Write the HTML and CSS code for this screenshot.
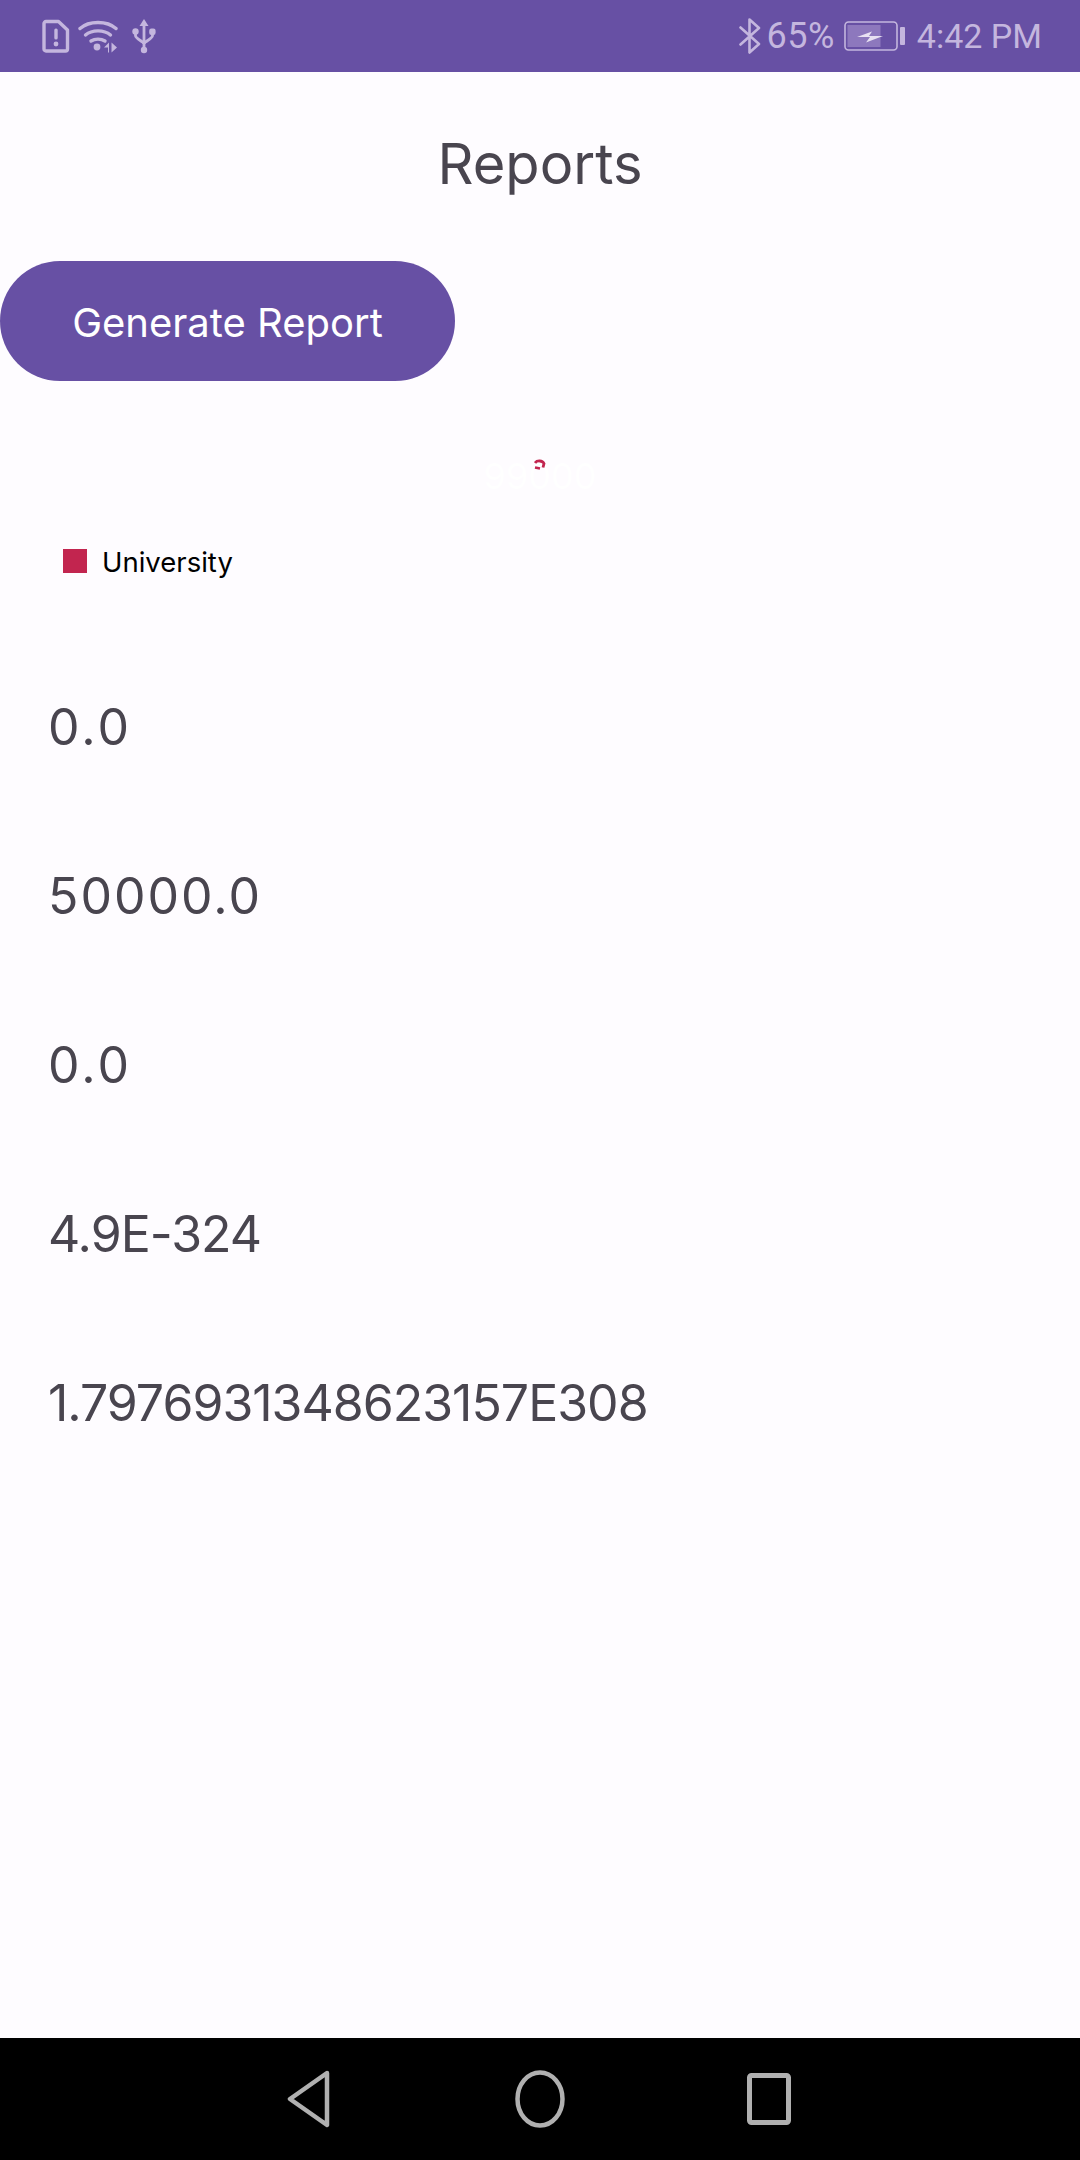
FILE: index.html
```html
<!DOCTYPE html>
<html lang="en">
<head>
  <meta charset="UTF-8" />
  <meta name="viewport" content="width=device-width, initial-scale=1.0" />
  <title>Reports</title>
  <link rel="stylesheet" href="styles.css">
</head>
<body>
  <div class="status-bar">
    <div class="status-left">
      <svg class="icon-file" width="28" height="34" viewBox="0 0 28 34">
        <path d="M4 2.500h12.500L25.500 11v19a2 2 0 0 1-2 2H4a2 2 0 0 1-2-2V4.500a2 2 0 0 1 2-2z" fill="none" stroke="#c4b6de" stroke-width="3.400" stroke-linejoin="round"/>
        <rect x="12.300" y="9.500" width="3.400" height="11" rx="1.500" fill="#c4b6de"/>
        <circle cx="14" cy="25" r="2.400" fill="#c4b6de"/>
      </svg>
      <svg class="icon-wifi" width="40" height="34" viewBox="0 0 40 34">
        <g fill="none" stroke="#c4b6de" stroke-width="3.400" stroke-linecap="round">
          <path d="M2 9.500C11 1.500 29 1.500 38 9.500"/>
          <path d="M7.500 16C14 10.500 26 10.500 32.500 16"/>
          <path d="M13 22C17 19.500 23 19.500 27 22"/>
        </g>
        <circle cx="19" cy="28" r="3.400" fill="#c4b6de"/>
        <path d="M26 28.500l5-5v10h-1v-5zM33.500 23.500v10l5.500-5z" fill="#c4b6de"/>
      </svg>
      <svg class="icon-usb" width="24" height="36" viewBox="0 0 24 36">
        <path d="M12 1l4.500 7h-9z" fill="#c4b6de"/>
        <g fill="none" stroke="#c4b6de" stroke-width="2.800">
          <path d="M12 7v24"/>
          <path d="M3.500 14v3.500c0 3.500 8.500 6 8.500 8.500"/>
          <path d="M20.500 14v3.500c0 3.500-8.500 6-8.500 8.500"/>
        </g>
        <circle cx="3.500" cy="13.500" r="3.200" fill="#c4b6de"/>
        <rect x="17.200" y="10.500" width="6.400" height="6.400" rx="2.200" fill="#c4b6de"/>
        <circle cx="12" cy="32" r="3.200" fill="#c4b6de"/>
      </svg>
    </div>
    <div class="status-right">
      <svg class="icon-bt" width="22" height="36" viewBox="0 0 22 36">
        <path d="M1.500 9.500L20 26 10.500 34.500V1.500L20 10 1.500 26.500" fill="none" stroke="#c4b6de" stroke-width="2.600" stroke-linecap="round" stroke-linejoin="round"/>
      </svg>
      <span class="status-text pct">65%</span>
      <svg class="icon-battery" width="62" height="30" viewBox="0 0 62 30">
        <rect x="1" y="1" width="52" height="28" rx="3.500" fill="none" stroke="#c4b6de" stroke-width="1.600"/>
        <rect x="3.500" y="4" width="33" height="22" fill="#8d78bd"/>
        <path d="M13 16l15-5.500-3 4.500h14l-17 6.500 4-5.500z" fill="#e8e1f2"/>
        <rect x="56" y="6" width="5" height="18" rx="1" fill="#c4b6de"/>
      </svg>
      <span class="status-text clock">4:42 PM</span>
    </div>
  </div>

  <main class="content">
    <h1 class="title">Reports</h1>
    <button class="generate-btn">Generate Report</button>

    <div class="chart">
      <span class="chart-value">99000</span>
      <svg class="chart-arc" width="12" height="12" viewBox="0 0 12 12">
        <path d="M1 5a5 4 0 0 1 9 0.500l-1 4M1 9.500l5 1" fill="none" stroke="#c2254f" stroke-width="2.800"/>
      </svg>
    </div>

    <div class="legend">
      <span class="legend-swatch"></span>
      <span class="legend-label">University</span>
    </div>

    <div class="stats">
      <p class="stat stat-loose">0.0</p>
      <p class="stat stat-wide">50000.0</p>
      <p class="stat stat-loose">0.0</p>
      <p class="stat stat-tight">4.9E-324</p>
      <p class="stat stat-tight">1.7976931348623157E308</p>
    </div>
  </main>

  <div class="nav-bar">
    <svg width="44" height="58" viewBox="0 0 44 58">
      <path d="M40 3L3 29l37 26z" fill="none" stroke="#b0b0b0" stroke-width="4.500" stroke-linejoin="round"/>
    </svg>
    <svg class="nav-home" width="50" height="58" viewBox="0 0 50 58">
      <ellipse cx="25" cy="29" rx="22.500" ry="26.500" fill="none" stroke="#b0b0b0" stroke-width="4.500"/>
    </svg>
    <svg class="nav-recent" width="45" height="52" viewBox="0 0 45 52">
      <rect x="2.500" y="2.500" width="39" height="47" rx="2" fill="none" stroke="#b0b0b0" stroke-width="5"/>
    </svg>
  </div>
</body>
</html>
```

FILE: styles.css
```css
html, body {
  margin: 0;
  padding: 0;
}
body {
  width: 1080px;
  height: 2160px;
  display: flex;
  flex-direction: column;
  font-family: Inter, Roboto, sans-serif;
  background: #fefcff;
  overflow: hidden;
}
.status-bar {
  height: 72px;
  flex: none;
  background: #6750a4;
  display: flex;
  align-items: center;
  justify-content: space-between;
  padding: 0 38px 0 42px;
  box-sizing: border-box;
}
.status-left, .status-right {
  display: flex;
  align-items: center;
}
.icon-wifi { margin-left: 8px; }
.icon-usb { margin-left: 14px; }
.status-right { gap: 6px; }
.status-text {
  color: #c4b6de;
  font-family: Roboto, sans-serif;
  font-size: 34px;
}
.pct {
  font-size: 36px;
  letter-spacing: 0.500px;
}
.icon-battery { margin-left: 3px; }
.clock { margin-left: 5px; }
.content {
  flex: 1;
  min-height: 0;
  position: relative;
}
.title {
  margin: 0;
  padding-top: 59px;
  height: 66px;
  line-height: 66px;
  text-align: center;
  font-size: 56px;
  font-weight: 400;
  color: #49454f;
}
.generate-btn {
  display: block;
  width: 455px;
  height: 120px;
  margin-top: 64px;
  padding: 2px 0 0;
  border: none;
  border-radius: 60px;
  background: #6750a4;
  color: #fff;
  font-family: inherit;
  font-size: 40px;
}
.chart {
  height: 100px;
  position: relative;
  text-align: center;
}
.chart-value {
  display: block;
  padding-top: 75px;
  font-size: 36px;
  line-height: 40px;
  color: #fff;
}
.chart-arc {
  position: absolute;
  left: 534px;
  top: 77px;
}
.legend {
  display: flex;
  align-items: center;
  gap: 15px;
  margin-top: 68px;
  padding-left: 63px;
  height: 24px;
}
.legend-swatch {
  width: 24px;
  height: 24px;
  background: #c2254f;
}
.legend-label {
  padding-top: 2px;
  font-size: 27.500px;
  line-height: 26px;
  color: #000;
}
.stats {
  margin-top: 122px;
  padding-left: 48px;
}
.stat {
  margin: 0 0 105px;
  height: 64px;
  line-height: 64px;
  font-size: 50px;
  color: #49454f;
}
.stat-loose { letter-spacing: 3px; }
.stat-wide { letter-spacing: 2px; }
.stat-tight { letter-spacing: -1px; }
.nav-bar {
  height: 122px;
  flex: none;
  background: #000;
  display: flex;
  align-items: center;
  padding-left: 287px;
}
.nav-home { margin-left: 184px; }
.nav-recent { margin-left: 182px; }
```
